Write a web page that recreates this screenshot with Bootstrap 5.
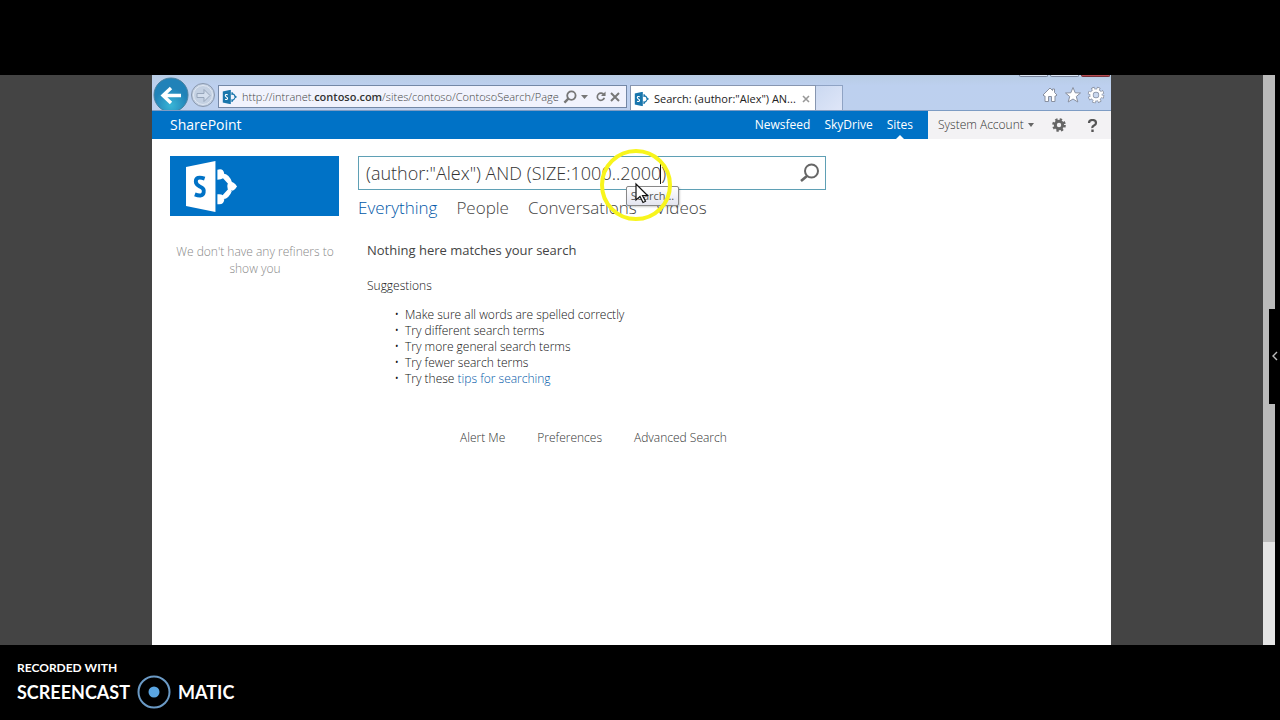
<!DOCTYPE html>
<html lang="en">
<head>
<meta charset="utf-8">
<meta name="viewport" content="width=device-width, initial-scale=1">
<title>Search: (author:"Alex") AND (SIZE:1000..2000)</title>
<link href="https://cdn.jsdelivr.net/npm/bootstrap@5.3.0/dist/css/bootstrap.min.css" rel="stylesheet">
<style>
body{font-family:"Open Sans","Noto Sans",sans-serif;font-size:12px;line-height:16px;color:#444;background:#000}
a{text-decoration:none;color:inherit}
svg{display:block;flex:none}
.stage{background:#444;margin-top:75px}
.side{flex:152 1 0}
.browser{flex:959 1 0;background:#fff;min-width:0}
.chrome{height:36px;background:linear-gradient(#b8cce4,#bdd0ef 30%,#bdd0ee);border-bottom:1px solid #7d9cc4}
.plain{border:0;background:none;padding:0;color:inherit}
.round-nav{margin-left:1px}
.address{width:409px;height:23px;margin:10px 0 0 2px;padding:0 6px 0 3px;background:#f1f3fd;border:1px solid #7488a6;color:#777}
.url-text{font-size:11px;font-weight:300;flex:1 1 0;min-width:0;overflow:hidden;white-space:nowrap;color:#444;margin:0 4px 0 4px}
.url-text b{font-weight:600;color:#333}
.page-tab{width:186px;height:26px;margin:10px 0 0 3px;padding:0 5px 0 3px;background:#fff;border:1px solid #8796b0;border-bottom:0;font-size:11px;color:#222}
.new-tab{width:27px;height:26px;margin-top:10px;border:1px solid #8fa3c4;border-width:1px 1px 0 0;background:linear-gradient(135deg,#cbd9f1,#dfe6f8)}
.tools{gap:5px;margin:5px 6px 0 0}
.caption{position:absolute;top:0;right:1px;gap:2px}
.caption i{width:29px;height:2px;border:1px solid #77839b;border-top:0;border-radius:0 0 3px 3px;background:#dce6f5}
.caption i:last-child{background:#b44b50;border-color:#75303a}
.suite{height:28px;background:#0072c6;color:#fff}
.suite-name{font-size:14px;margin-left:18px}
.suite-links{gap:14px;padding-right:15px}
.current::after{content:"";position:absolute;left:50%;bottom:0;margin-left:-4px;border:4px solid transparent;border-top:0;border-bottom-color:#fff}
.account{width:183px;background:#f3f2f4;color:#666;padding:0 13px 0 10px}
.account-name{font-weight:300;color:#333}
.settings{margin:0 21px 0 auto}
.content{padding:17px 0 0 18px}
.left{width:170px;flex:none}
.site-logo{width:169px;height:60px;background:#0072c6}
.refiners{margin:27px 0 0;color:#888;line-height:17px;text-align:center;font-weight:300}
.main-col{margin-left:18px;width:468px}
.query{height:34px;border:1px solid #5fa0b5}
.query input{border:0;outline:0;background:none;min-width:0;padding:0 0 0 7px;font-size:18px;font-weight:300;color:#333}
.verticals{gap:19px;font-size:17px;font-weight:300;line-height:24px;margin-top:6px;color:#444}
.blue{color:#0058a8}
.results{margin:21px 0 0 9px;color:#111}
.results h1{font-size:13px;line-height:18px;margin:0 0 19px;font-weight:400;color:#444}
.results h2{font-size:12px;line-height:16px;margin:0 0 13px;font-weight:300}
.results ul{margin:0;padding-left:38px;font-weight:300}
.results li::marker{content:"•\2002"}
.foot-links{gap:32px;margin:43px 0 0 102px;color:#333;font-weight:300}
.tip{position:absolute;left:268px;top:30px;width:53px;height:20px;border:1px solid #888;border-radius:2px;background:linear-gradient(#fff,#e4e5f0);color:#555;font-size:11px;line-height:18px;box-shadow:1px 1px 2px #0003;text-align:center}
.halo{position:absolute;left:242px;top:-8px}
.caret{position:absolute;left:302px;top:4px;width:1px;height:24px;background:#111}
.rail{width:12px;background:#e4e4e4}
.rail-thumb{height:82%;background:#bababa}
.edge{width:5px;background:#000}
.drawer{position:absolute;right:0;top:41%;width:11px;height:95px;background:#000;color:#ccc}
.credit{height:75px;padding:16px 17px 0;color:#fff;font-family:"Lato","Open Sans",sans-serif;font-weight:700}
.credit-small{font-size:12px;line-height:14px}
.credit-big{font-size:18px;line-height:32px;gap:7px}
</style>
</head>
<body class="vh-100 d-flex flex-column overflow-hidden">
<svg class="d-none"><defs>
<symbol id="sp" viewBox="0 0 54 52"><path fill="currentColor" d="M0 6 30 0V52L0 46z"/><path fill="none" stroke="currentColor" stroke-width="3.5" d="M36 13 46 24M46 28 36 39"/><path fill="currentColor" d="M32 9q6-2 7 4t-7 6zM32 34q7-1 7 5t-7 5zM38 13q6 0 9 9l-3 2zM38 39q6-1 9-9l-3-2zM44 21q5 0 8 5-3 5-8 5-4-5 0-10z"/><path fill="none" stroke="var(--ink)" stroke-width="4" d="M19 18q-9-3-9 3 0 3 4 5 5 2 4 6-1 5-9 2"/></symbol>
<symbol id="mag" viewBox="0 0 20 20"><circle cx="12" cy="8" r="6" fill="none" stroke="currentColor" stroke-width="2.6"/><path d="m8 12-6 6" stroke="currentColor" stroke-width="3.4"/></symbol>
<symbol id="gear" viewBox="0 0 16 16"><circle cx="8" cy="8" r="4.2" fill="none" stroke="currentColor" stroke-width="3.4"/><circle cx="8" cy="8" r="6.3" fill="none" stroke="currentColor" stroke-width="3" stroke-dasharray="2.6 2.35"/></symbol>
</defs></svg>
<div class="stage d-flex flex-fill position-relative">
  <div class="side"></div>
  <div class="browser position-relative">
    <header class="chrome d-flex position-relative overflow-hidden">
      <div class="caption d-flex"><i></i><i></i><i></i></div>
      <button class="plain round-nav" aria-label="Back"><svg width="36" height="36" viewBox="0 0 36 36"><defs><radialGradient id="g" cy=".8"><stop stop-color="#39b5d6"/><stop offset="1" stop-color="#2182b8"/></radialGradient></defs><circle cx="18" cy="20" r="17" fill="url(#g)" stroke="#49819f"/><path d="M28 20.500H11M18 13l-8 7.500 8 7.500" fill="none" stroke="#fff" stroke-width="3.400"/></svg></button>
      <button class="plain" aria-label="Forward"><svg width="27" height="36" viewBox="0 0 27 36"><circle cx="14" cy="20" r="11.500" fill="#c3d0e2" stroke="#8998ae"/><circle cx="14" cy="20" r="9.500" fill="none" stroke="#dfe7f2"/><path d="M8 18.500h7v-4l6 6-6 6v-4H8z" fill="#d3deed" stroke="#97a6bb"/></svg></button>
      <div class="address d-flex align-items-center">
        <svg width="16" height="16" viewBox="-2 -2 58 56" style="color:#1976ac;--ink:#fff"><use href="#sp" width="54" height="52"/></svg>
        <div class="url-text">http://intranet.<b>contoso.com</b>/sites/contoso/ContosoSearch/Page</div>
        <button class="plain" aria-label="Find"><svg width="14" height="14"><use href="#mag"/></svg></button>
        <button class="plain ms-1 me-2" aria-label="Show list"><svg width="7" height="4"><path d="M0 0h7L3.500 4z" fill="#777"/></svg></button>
        <button class="plain" aria-label="Refresh"><svg width="10" height="11" viewBox="0 0 12 12"><path d="M9.500 4A4.300 4.300 0 1 0 10 7.500" fill="none" stroke="#777" stroke-width="2"/><path d="M11.500 0v5.500H6z" fill="#777"/></svg></button>
        <button class="plain ms-1" aria-label="Stop"><svg width="10" height="10" viewBox="0 0 10 10"><path d="m1 1 8 8M9 1 1 9" stroke="#777" stroke-width="2"/></svg></button>
      </div>
      <div class="page-tab d-flex align-items-center"><svg width="16" height="16" viewBox="-2 -2 58 56" style="color:#1976ac;--ink:#fff"><use href="#sp" width="54" height="52"/></svg><span class="ms-1 flex-fill text-nowrap">Search: (author:"Alex") AN...</span><button class="plain" aria-label="Close tab"><svg width="8" height="8" viewBox="0 0 8 8"><path d="m1 1 6 6M7 1 1 7" stroke="#999" stroke-width="1.600"/></svg></button></div>
      <button class="new-tab p-0" aria-label="New tab"></button>
      <div class="tools d-flex align-items-center ms-auto">
        <button class="plain" aria-label="Home"><svg width="18" height="18" viewBox="0 0 18 18"><path d="m2 9 7-7 2.500 2.500V3h2v3.500L16 9l-1 1h-1v5.500h-3.500v-5h-3v5H4V10H3z" fill="#fff" stroke="#8990a0"/></svg></button>
        <button class="plain" aria-label="Favorites"><svg width="18" height="18" viewBox="0 0 18 18"><path d="m9 1.500 2.200 5.300 5.300.200-4.200 3.500 1.500 5.500L9 13l-4.800 3 1.500-5.500L1.500 7l5.300-.200z" fill="#fff" stroke="#8990a0"/></svg></button>
        <button class="plain" aria-label="Tools"><svg width="18" height="18" viewBox="0 0 18 18"><g fill="none"><circle cx="9" cy="9" r="6.400" stroke="#8990a0" stroke-width="3.800" stroke-dasharray="3 2.030"/><circle cx="9" cy="9" r="4.500" stroke="#8990a0" stroke-width="4"/><circle cx="9" cy="9" r="6.300" stroke="#fff" stroke-width="2.400" stroke-dasharray="2 2.950" stroke-dashoffset="-.5"/><circle cx="9" cy="9" r="4.500" stroke="#fff" stroke-width="2.600"/></g><circle cx="9" cy="9" r="2" fill="#ccd8ec"/></svg></button>
      </div>
    </header>
    <nav class="suite d-flex" aria-label="Suite">
      <a href="#" class="suite-name align-self-center">SharePoint</a>
      <div class="suite-links d-flex ms-auto">
        <a href="#" class="align-self-center">Newsfeed</a><a href="#" class="align-self-center">SkyDrive</a><a href="#" class="current position-relative d-flex align-items-center">Sites</a>
      </div>
      <div class="account d-flex align-items-center">
        <button class="plain account-name d-flex align-items-center gap-1">System Account<svg width="6" height="4"><path d="M0 0h6L3 4z" fill="#666"/></svg></button>
        <button class="plain settings" aria-label="Settings"><svg width="14" height="14"><use href="#gear"/></svg></button>
        <button class="plain" aria-label="Help"><svg width="11" height="13" viewBox="0 0 11 13"><path d="M2 4q0-3 3.500-3T9 4q0 1.500-2 2.500T5.500 9" fill="none" stroke="#555" stroke-width="2.200"/><path d="M4.300 10.500h2.400V13H4.300z" fill="#555"/></svg></button>
      </div>
    </nav>
    <div class="content d-flex">
      <aside class="left">
        <a href="#" class="site-logo d-flex align-items-center" aria-label="Site home"><svg class="ms-3" width="53" height="51" style="color:#fff;--ink:#0072c6"><use href="#sp"/></svg></a>
        <p class="refiners">We don't have any refiners to<br>show you</p>
      </aside>
      <main class="main-col position-relative">
        <form class="query d-flex align-items-center"><input class="flex-fill" type="text" aria-label="Search" value='(author:"Alex") AND (SIZE:1000..2000)'><button type="button" class="plain me-1" aria-label="Run search"><svg width="23" height="23" viewBox="0 0 23 23"><circle cx="13.500" cy="9" r="6.500" fill="none" stroke="#666" stroke-width="2"/><path d="m9 14-6 5" stroke="#666" stroke-width="2.600"/></svg></button></form>
        <nav class="verticals d-flex" aria-label="Search verticals"><a href="#" class="blue">Everything</a><a href="#">People</a><a href="#">Conversations</a><a href="#">Videos</a></nav>
        <section class="results">
          <h1>Nothing here matches your search</h1>
          <h2>Suggestions</h2>
          <ul><li>Make sure all words are spelled correctly</li><li>Try different search terms</li><li>Try more general search terms</li><li>Try fewer search terms</li><li>Try these <a href="#" class="blue">tips for searching</a></li></ul>
        </section>
        <div class="foot-links d-flex"><a href="#">Alert Me</a><a href="#">Preferences</a><a href="#">Advanced Search</a></div>
        <span class="caret"></span>
        <div class="tip" role="tooltip">Search...</div>
        <svg class="halo" width="74" height="74" viewBox="0 0 74 74"><circle cx="36" cy="37" r="34" fill="none" stroke="#f8f51c" stroke-width="4"/><path d="M36 36v16l4-3.500 3 6 2.500-1.200-3-5.800h5z" fill="#fff" stroke="#111" stroke-width="1.200"/></svg>
      </main>
    </div>
  </div>
  <div class="side"></div>
  <div class="rail"><div class="rail-thumb"></div></div>
  <div class="edge"></div>
  <button class="plain drawer d-flex align-items-center justify-content-center" aria-label="Open panel"><svg width="6" height="10" viewBox="0 0 6 10"><path d="M5 1 1 5l4 4" fill="none" stroke="#bbb" stroke-width="1.400"/></svg></button>
</div>
<footer class="credit">
  <div class="credit-small">RECORDED WITH</div>
  <div class="credit-big d-flex align-items-center"><span>SCREENCAST</span><svg width="34" height="34" viewBox="0 0 34 34"><circle cx="17" cy="17" r="15.500" fill="none" stroke="#6b9ac5" stroke-width="2"/><circle cx="17" cy="17" r="5.500" fill="#5aa5e2"/></svg><span>MATIC</span></div>
</footer>
</body>
</html>
